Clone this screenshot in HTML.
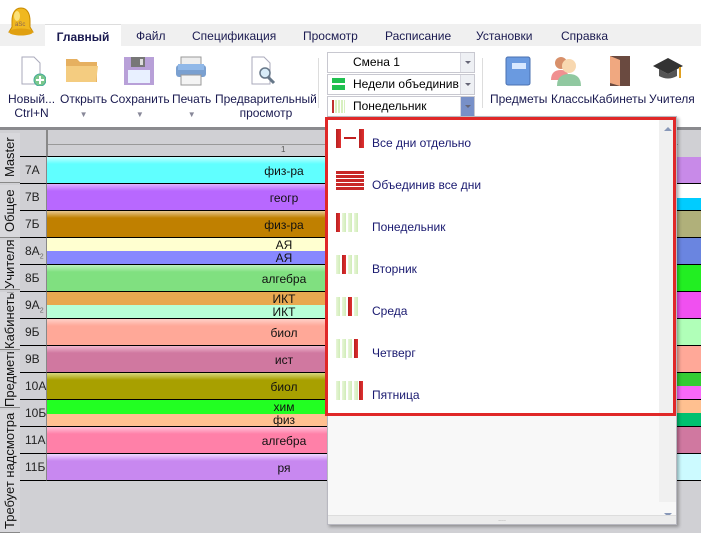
<!DOCTYPE html>
<html><head><meta charset="utf-8"><style>
*{margin:0;padding:0;box-sizing:border-box}
body{width:701px;height:533px;overflow:hidden;position:relative;background:#fff;font-family:"Liberation Sans","DejaVu Sans",sans-serif;font-size:12px;color:#1a1a50}
.abs{position:absolute}
.tabs{left:0;top:24px;width:701px;height:22px;background:#f0f0f0}
.tab{position:absolute;top:0;height:22px;line-height:25px;font-size:12px;color:#1a1a50}
.lbl{position:absolute;font-size:12px;color:#1a1a50;text-align:center;line-height:14px;white-space:nowrap}
.combo{position:absolute;left:327px;width:148px;height:21px;border:1px solid #c8c8d0;background:#fff;font-size:12px;line-height:19px;color:#000}
.combo .btn{position:absolute;right:0;top:0;width:14px;height:19px;background:#eef0f4;border-left:1px solid #d8d8e0}
.combo .btn:after{content:"";position:absolute;left:4px;top:8px;border-left:3px solid transparent;border-right:3px solid transparent;border-top:3px solid #667}
.grid{left:0;top:127px;width:701px;height:406px;background:#d0d0d4;border-top:3px solid #8a8a8e}
.row{position:absolute;left:47px;width:630px;height:27px;border-bottom:1px solid #000;font-size:12px;color:#111}
.rh{position:absolute;left:20px;width:27px;height:27px;border-bottom:1px solid #000;border-right:1px solid #888;font-size:12px;color:#222;padding-left:5px;line-height:27px}
.cell{position:absolute;left:0;width:280px;text-align:center;padding-left:194px;font-size:12px}
.rs{position:absolute;left:677px;width:24px;border-bottom:1px solid #000}
.vt{position:absolute;left:0;width:20px;writing-mode:vertical-rl;transform:rotate(180deg);font-size:13px;color:#111;text-align:center;border-top:1px solid #888;background:#d8d8dc;line-height:20px;overflow:hidden;white-space:nowrap}
.pop{left:327px;top:116px;width:350px;height:409px;background:#f8f8f8;border:1px solid #b8b8c0;box-shadow:2px 2px 3px rgba(0,0,0,.3)}
.item{position:absolute;left:8px;height:42px;width:320px}
.item span{position:absolute;left:36px;top:15px;font-size:12px;color:#1a1a70}
.ico{position:absolute;left:0;top:8px;width:28px;height:19px}
.b{position:absolute;top:0;width:4px;height:19px;background:linear-gradient(to right,#e8f6d8,#d0ecb8)}
.r{background:linear-gradient(to right,#b82020,#e03030)!important}
</style></head><body>
<div class="abs tabs">
<div class="tab" style="left:45px;width:76px;background:#fff;text-align:center;font-weight:bold;border-top:1px solid #ddd">Главный</div>
<div class="tab" style="left:136px">Файл</div>
<div class="tab" style="left:192px">Спецификация</div>
<div class="tab" style="left:303px">Просмотр</div>
<div class="tab" style="left:385px">Расписание</div>
<div class="tab" style="left:476px">Установки</div>
<div class="tab" style="left:561px">Справка</div>
</div>
<!-- logo bell -->
<svg class="abs" style="left:6px;top:6px;z-index:5" width="30" height="32" viewBox="0 0 30 32"><path d="M15 2 C8 2 6 9 6 15 L6 21 L3 26 L27 26 L24 21 L24 15 C24 9 22 2 15 2Z" fill="#f0b820" stroke="#c88a00"/><ellipse cx="15" cy="26" rx="12" ry="3.5" fill="#e0a010"/><ellipse cx="11" cy="10" rx="3" ry="5" fill="#fff2a0" opacity=".7"/><text x="9" y="20" font-size="6" fill="#865" font-family="Liberation Sans">aSc</text></svg>
<!-- ribbon icons -->
<svg class="abs" style="left:20px;top:56px" width="26" height="30"><path d="M2 1 H14 L20 7 V28 H2Z" fill="#fff" stroke="#aab"/><circle cx="20" cy="24" r="6" fill="#7cc88c" stroke="#4a9"/><path d="M20 20 V28 M16 24 H24" stroke="#fff" stroke-width="2"/></svg>
<svg class="abs" style="left:65px;top:56px" width="34" height="28"><path d="M1 3 H12 L15 6 H32 V26 H1Z" fill="#e6b060"/><path d="M1 10 H33 L31 26 H1Z" fill="#f4cc80"/></svg>
<svg class="abs" style="left:123px;top:56px" width="32" height="30"><rect x="1" y="1" width="30" height="28" fill="#b8a0d8"/><rect x="8" y="1" width="14" height="10" fill="#777"/><rect x="17" y="3" width="3" height="6" fill="#ddd"/><rect x="5" y="14" width="22" height="13" fill="#e8f0ff"/></svg>
<svg class="abs" style="left:175px;top:56px" width="32" height="30"><rect x="6" y="1" width="20" height="8" fill="#eee" stroke="#999"/><rect x="1" y="9" width="30" height="12" rx="3" fill="#7aa0d0"/><rect x="3" y="8" width="26" height="6" fill="#90b8e8"/><rect x="6" y="19" width="20" height="10" fill="#f4f4f4" stroke="#999"/></svg>
<svg class="abs" style="left:250px;top:56px" width="30" height="30"><path d="M2 1 H14 L20 7 V28 H2Z" fill="#fff" stroke="#aab"/><circle cx="15" cy="17" r="5" fill="#d8ecf8" stroke="#678" stroke-width="1.5"/><path d="M18 21 L24 27" stroke="#678" stroke-width="3"/></svg>
<div class="lbl" style="left:8px;top:92px">Новый...<br>Ctrl+N</div>
<div class="lbl" style="left:60px;top:92px">Открыть<br><span style="font-size:8px;color:#889">▼</span></div>
<div class="lbl" style="left:110px;top:92px">Сохранить<br><span style="font-size:8px;color:#889">▼</span></div>
<div class="lbl" style="left:172px;top:92px">Печать<br><span style="font-size:8px;color:#889">▼</span></div>
<div class="lbl" style="left:215px;top:92px">Предварительный<br>просмотр</div>
<div class="abs" style="left:318px;top:58px;width:1px;height:50px;background:#ddd"></div>
<div class="combo" style="top:52px"><span style="padding-left:25px">Смена 1</span><div class="btn"></div></div>
<div class="combo" style="top:74px"><div class="abs" style="left:4px;top:3px;width:13px;height:5px;background:#20c050"></div><div class="abs" style="left:4px;top:10px;width:13px;height:5px;background:#20c050"></div><span style="padding-left:25px">Недели объединив</span><div class="btn"></div></div>
<div class="combo" style="top:96px"><div class="abs" style="left:4px;top:3px;width:2px;height:13px;background:#c03030"></div><div class="abs" style="left:7px;top:3px;width:10px;height:13px;background:repeating-linear-gradient(to right,#d8f0c0 0 2px,#fff 2px 3px)"></div><span style="padding-left:25px">Понедельник</span><div class="btn" style="background:#7890c8"></div></div>
<div class="abs" style="left:482px;top:58px;width:1px;height:50px;background:#ddd"></div>
<svg class="abs" style="left:505px;top:56px" width="26" height="30"><rect x="1" y="1" width="24" height="28" rx="2" fill="#6a9ae0" stroke="#4a70b0"/><rect x="7" y="7" width="14" height="6" fill="#d8e8ff"/></svg>
<svg class="abs" style="left:549px;top:54px" width="34" height="32"><circle cx="12" cy="9" r="6" fill="#d8906a"/><path d="M2 26 Q2 16 12 16 Q20 16 20 26Z" fill="#f09090"/><circle cx="20" cy="12" r="7" fill="#f8d8b0"/><path d="M8 32 Q8 20 20 20 Q32 20 32 32Z" fill="#90c8a0"/></svg>
<svg class="abs" style="left:606px;top:55px" width="26" height="32"><rect x="4" y="1" width="20" height="30" fill="#6a4a40"/><path d="M4 1 L14 5 V31 L4 28Z" fill="#f0a880"/></svg>
<svg class="abs" style="left:652px;top:56px" width="32" height="30"><path d="M16 2 L31 10 L16 18 L1 10Z" fill="#333"/><path d="M7 13 V20 Q16 25 25 20 V13 L16 18Z" fill="#555"/><path d="M28 11 V22" stroke="#e0a020" stroke-width="2"/></svg>
<div class="lbl" style="left:490px;top:92px">Предметы</div>
<div class="lbl" style="left:551px;top:92px">Классы</div>
<div class="lbl" style="left:592px;top:92px">Кабинеты</div>
<div class="lbl" style="left:649px;top:92px">Учителя</div>

<div class="abs grid"></div>
<div class="abs" style="left:47px;top:130px;width:630px;height:27px;border-bottom:1px solid #000;border-left:1px solid #888"><div class="abs" style="left:0;top:14px;width:630px;border-top:1px solid #999"></div><div class="abs" style="left:233px;top:15px;font-size:8px;color:#555">1</div></div>
<div class="abs" style="left:20px;top:130px;width:27px;height:27px;border-bottom:1px solid #000;border-right:1px solid #888"></div>

<div class="rh" style="top:157px">7А</div><div class="row" style="top:157px;background:linear-gradient(#c0ffff,#60ffff 7px)"><div class="cell" style="top:7px">физ-ра</div></div>
<div class="rh" style="top:184px">7В</div><div class="row" style="top:184px;background:linear-gradient(#e0b0ff,#b868ff 7px)"><div class="cell" style="top:7px">геогр</div></div>
<div class="rh" style="top:211px">7Б</div><div class="row" style="top:211px;background:linear-gradient(#e8c890,#c08000 7px)"><div class="cell" style="top:7px">физ-ра</div></div>
<div class="rh" style="top:238px">8А<sub style="font-size:7px;color:#666">2</sub></div><div class="row" style="top:238px;background:linear-gradient(#ffffd0 0,#ffffd0 13px,#8888ff 13px)"><div class="cell" style="top:0">АЯ</div><div class="cell" style="top:13px">АЯ</div></div>
<div class="rh" style="top:265px">8Б</div><div class="row" style="top:265px;background:linear-gradient(#c0f0c0,#80e080 7px)"><div class="cell" style="top:7px">алгебра</div></div>
<div class="rh" style="top:292px">9А<sub style="font-size:7px;color:#666">2</sub></div><div class="row" style="top:292px;background:linear-gradient(#e8a850 0,#e8a850 13px,#b8ffd8 13px)"><div class="cell" style="top:0">ИКТ</div><div class="cell" style="top:13px">ИКТ</div></div>
<div class="rh" style="top:319px">9Б</div><div class="row" style="top:319px;background:linear-gradient(#ffd0c8,#ffa898 7px)"><div class="cell" style="top:7px">биол</div></div>
<div class="rh" style="top:346px">9В</div><div class="row" style="top:346px;background:linear-gradient(#f0b8d0,#d078a0 7px)"><div class="cell" style="top:7px">ист</div></div>
<div class="rh" style="top:373px">10А<sub style="font-size:7px;color:#666">1</sub></div><div class="row" style="top:373px;background:linear-gradient(#d8d880,#a8a000 7px)"><div class="cell" style="top:7px">биол</div></div>
<div class="rh" style="top:400px">10Б</div><div class="row" style="top:400px;background:linear-gradient(#22ff22 0,#22ff22 14px,#ffc090 14px)"><div class="cell" style="top:0">хим</div><div class="cell" style="top:13px">физ</div></div>
<div class="rh" style="top:427px">11А</div><div class="row" style="top:427px;background:linear-gradient(#ffc0d8,#ff80a8 7px)"><div class="cell" style="top:7px">алгебра</div></div>
<div class="rh" style="top:454px">11Б</div><div class="row" style="top:454px;background:linear-gradient(#f0d8ff,#c888f0 7px)"><div class="cell" style="top:7px">ря</div></div>

<div class="rs" style="top:157px;height:27px;background:#c88ae8"></div>
<div class="rs" style="top:184px;height:27px;background:linear-gradient(#fff 0,#fff 14px,#00ccff 14px)"></div>
<div class="rs" style="top:211px;height:27px;background:#b0b07a"></div>
<div class="rs" style="top:238px;height:27px;background:#6a85e0"></div>
<div class="rs" style="top:265px;height:27px;background:#22ee22"></div>
<div class="rs" style="top:292px;height:27px;background:#f050f0"></div>
<div class="rs" style="top:319px;height:27px;background:#b0ffb8"></div>
<div class="rs" style="top:346px;height:27px;background:#ffa898"></div>
<div class="rs" style="top:373px;height:27px;background:linear-gradient(#33cc33 0,#33cc33 13px,#f868f8 13px)"></div>
<div class="rs" style="top:400px;height:27px;background:linear-gradient(#ffc090 0,#ffc090 13px,#00c070 13px)"></div>
<div class="rs" style="top:427px;height:27px;background:#d078a0"></div>
<div class="rs" style="top:454px;height:27px;background:#ccfaff"></div>

<div class="vt" style="top:133px;height:50px">Master</div>
<div class="vt" style="top:185px;height:53px">Общее</div>
<div class="vt" style="top:240px;height:50px">Учителя</div>
<div class="vt" style="top:292px;height:58px">Кабинеты</div>
<div class="vt" style="top:352px;height:56px">Предметы</div>
<div class="vt" style="top:410px;height:123px">Требует надсмотра</div>

<div class="abs pop">
<div class="abs" style="left:0;top:0;width:331px;height:299px;background:#fff"></div>
<div class="abs" style="left:331px;top:0;width:17px;height:385px;background:#f0f0f0"></div>
<div class="abs" style="left:336px;top:10px;border-left:4px solid transparent;border-right:4px solid transparent;border-bottom:4px solid #8898b8"></div>
<div class="abs" style="left:336px;top:396px;border-left:4px solid transparent;border-right:4px solid transparent;border-top:4px solid #8898b8"></div>
<div class="abs" style="left:0;top:398px;width:348px;height:9px;background:#ececec;border-top:1px solid #ddd;text-align:center;font-size:7px;line-height:7px;color:#999">....</div>
<div class="abs" style="left:-3px;top:0;width:351px;height:299px;border:3px solid #e02828"></div>
<div class="item" style="top:4px"><div class="ico"><div class="b r" style="left:0;width:5px"></div><div class="abs" style="left:8px;top:8px;width:12px;height:2px;background:#c02020"></div><div class="b r" style="left:23px;width:5px"></div></div><span>Все дни отдельно</span></div>
<div class="item" style="top:46px"><div class="ico" style="background:repeating-linear-gradient(#c82828 0 3px,#fff 3px 4px)"></div><span>Объединив все дни</span></div>
<div class="item" style="top:88px"><div class="ico"><div class="b r" style="left:0"></div><div class="b" style="left:6px"></div><div class="b" style="left:12px"></div><div class="b" style="left:18px"></div></div><span>Понедельник</span></div>
<div class="item" style="top:130px"><div class="ico"><div class="b" style="left:0"></div><div class="b r" style="left:6px"></div><div class="b" style="left:12px"></div><div class="b" style="left:18px"></div></div><span>Вторник</span></div>
<div class="item" style="top:172px"><div class="ico"><div class="b" style="left:0"></div><div class="b" style="left:6px"></div><div class="b r" style="left:12px"></div><div class="b" style="left:18px"></div></div><span>Среда</span></div>
<div class="item" style="top:214px"><div class="ico"><div class="b" style="left:0"></div><div class="b" style="left:6px"></div><div class="b" style="left:12px"></div><div class="b r" style="left:18px"></div></div><span>Четверг</span></div>
<div class="item" style="top:256px"><div class="ico"><div class="b" style="left:0"></div><div class="b" style="left:6px"></div><div class="b" style="left:12px"></div><div class="b" style="left:18px"></div><div class="b r" style="left:23px"></div></div><span>Пятница</span></div>
</div>
</body></html>
